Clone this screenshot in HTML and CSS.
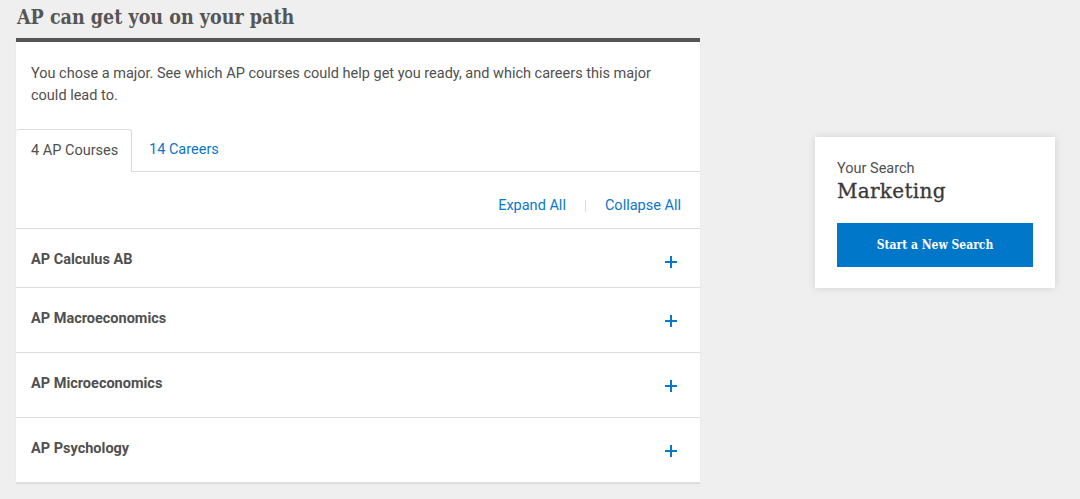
FILE: index.html
```html
<!DOCTYPE html>
<html lang="en">
<head>
<meta charset="utf-8">
<title>AP can get you on your path</title>
<link rel="stylesheet" href="styles.css">
</head>
<body>
<div class="page">
  <main class="main">
    <h2 class="title">AP can get you on your path</h2>
    <section class="panel">
      <p class="intro">You chose a major. See which AP courses could help get you ready, and which careers this major could lead to.</p>
      <div class="tabs">
        <div class="tab tab-active">4 AP Courses</div>
        <div class="tab tab-link">14 Careers</div>
      </div>
      <div class="controls">
        <a class="ctl">Expand All</a>
        <span class="sep"></span>
        <a class="ctl">Collapse All</a>
      </div>
      <ul class="acc">
        <li class="row row-first"><span class="row-title">AP Calculus AB</span><svg class="plus" viewBox="0 0 12 12"><path d="M6 0v12M0 6h12"/></svg></li>
        <li class="row"><span class="row-title">AP Macroeconomics</span><svg class="plus" viewBox="0 0 12 12"><path d="M6 0v12M0 6h12"/></svg></li>
        <li class="row"><span class="row-title">AP Microeconomics</span><svg class="plus" viewBox="0 0 12 12"><path d="M6 0v12M0 6h12"/></svg></li>
        <li class="row"><span class="row-title">AP Psychology</span><svg class="plus" viewBox="0 0 12 12"><path d="M6 0v12M0 6h12"/></svg></li>
      </ul>
    </section>
  </main>
  <aside class="aside">
    <div class="card">
      <div class="card-label">Your Search</div>
      <div class="card-value">Marketing</div>
      <button class="btn">Start a New Search</button>
    </div>
  </aside>
</div>
</body>
</html>
```

FILE: styles.css
```css
* { box-sizing: border-box; }
html, body { margin: 0; padding: 0; }
body {
  background: #efefef;
  font-family: Roboto, "Liberation Sans", sans-serif;
  color: #505050;
  height: 499px;
  overflow: hidden;
}
.page {
  display: flex;
  align-items: flex-start;
  padding: 0 16px;
}
.main { width: 684px; flex: none; }
.title {
  margin: 6px 0 8px 1px;
  font-family: "DejaVu Serif", "Liberation Serif", serif;
  font-stretch: semi-condensed;
  font-weight: bold;
  font-size: 19.5px;
  line-height: 24px;
  color: #555;
  white-space: nowrap;
}
.panel {
  background: #fff;
  border-top: 4px solid #555;
  box-shadow: 0 1px 1px rgba(0,0,0,0.08);
}
.intro {
  margin: 0;
  padding: 21px 15px 0;
  font-size: 14.5px;
  line-height: 22px;
  color: #505050;
}
.tabs {
  display: flex;
  margin-top: 22px;
  border-bottom: 1px solid #dcdcdc;
  height: 43px;
}
.tab {
  font-size: 14.5px;
  line-height: 42px;
  padding: 0 15px;
  white-space: nowrap;
}
.tab-active {
  width: 116px;
  flex: none;
  border: 1px solid #dcdcdc;
  border-bottom: none;
  border-left: none;
  border-radius: 3px 3px 0 0;
  background: #fff;
  height: 43px;
  margin-bottom: -1px;
  padding: 0 0 0 15px;
  color: #505050;
}
.tab-link { color: #0a77c8; padding-left: 17px; }
.controls {
  display: flex;
  justify-content: flex-end;
  align-items: center;
  height: 57px;
  padding: 11px 19px 0 0;
  border-bottom: 1px solid #dcdcdc;
}
.ctl {
  font-size: 14.5px;
  color: #0a77c8;
  cursor: pointer;
}
.sep {
  width: 1px;
  height: 12px;
  background: #ddd;
  margin: 0 19px 0 19px;
}
.acc { list-style: none; margin: 0; padding: 0; }
.row {
  display: flex;
  align-items: center;
  justify-content: space-between;
  height: 65px;
  padding: 0 23px 0 15px;
  border-bottom: 1px solid #dedede;
}
.row-first { height: 59px; padding-top: 6px; }
.row-title {
  font-size: 14.5px;
  font-weight: bold;
  color: #505050;
  margin-top: -4px;
}
.plus {
  width: 12px;
  height: 12px;
  margin-top: 2px;
  stroke: #0a77c8;
  stroke-width: 2;
  fill: none;
}
.aside {
  margin-left: 115px;
  margin-top: 137px;
}
.card {
  width: 240px;
  height: 151px;
  background: #fff;
  box-shadow: 0 0 8px rgba(0,0,0,0.12);
  padding: 24px 22px 0;
}
.card-label {
  font-size: 14.5px;
  line-height: 16px;
  color: #505050;
}
.card-value {
  font-family: "DejaVu Serif", "Liberation Serif", serif;
  font-size: 20px;
  line-height: 24px;
  color: #383838;
  margin-top: 2px;
  letter-spacing: 0.3px;
  -webkit-text-stroke: 0.3px #383838;
}
.btn {
  display: block;
  margin-top: 20px;
  width: 196px;
  height: 44px;
  border: none;
  background: #0077c8;
  color: #fff;
  font-family: "DejaVu Serif", "Liberation Serif", serif;
  font-stretch: semi-condensed;
  font-weight: bold;
  font-size: 12px;
  padding: 0;
}
```
